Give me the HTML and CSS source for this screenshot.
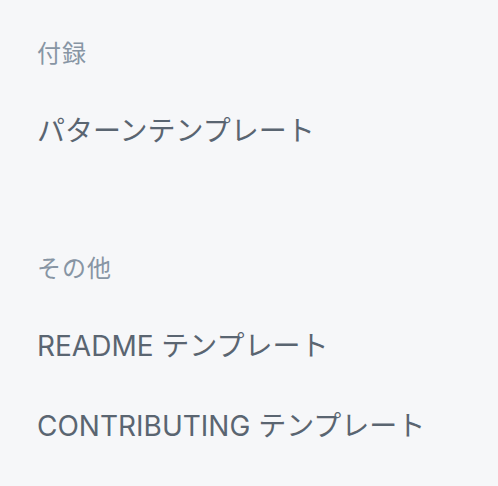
FILE: index.html
```html
<!DOCTYPE html>
<html lang="ja">
<head>
<meta charset="utf-8">
<link rel="stylesheet" href="styles.css">
</head>
<body>
<nav class="sidebar">
  <section class="group">
    <h2 class="group-title">付録</h2>
    <ul class="links">
      <li><a href="#">パターンテンプレート</a></li>
    </ul>
  </section>
  <section class="group">
    <h2 class="group-title">その他</h2>
    <ul class="links">
      <li><a href="#">README テンプレート</a></li>
      <li><a href="#">CONTRIBUTING テンプレート</a></li>
    </ul>
  </section>
</nav>
</body>
</html>
```

FILE: styles.css
```css
html, body {
  margin: 0;
  padding: 0;
  background: #f6f7f9;
}
body {
  font-family: Inter, "Noto Sans CJK JP", sans-serif;
  width: 498px;
  height: 486px;
  overflow: hidden;
}
.sidebar {
  padding: 39px 0 0 37px;
  display: flex;
  flex-direction: column;
  gap: 105px;
}
.group-title {
  margin: 0;
  font-size: 24px;
  line-height: 30px;
  font-weight: 400;
  color: #8795a4;
  letter-spacing: 1px;
}
.links {
  list-style: none;
  margin: 0;
  padding: 0;
}
.links li {
  margin-top: 44px;
}
.links a {
  display: block;
  font-size: 28px;
  line-height: 36px;
  color: #5a6571;
  text-decoration: none;
}
```
